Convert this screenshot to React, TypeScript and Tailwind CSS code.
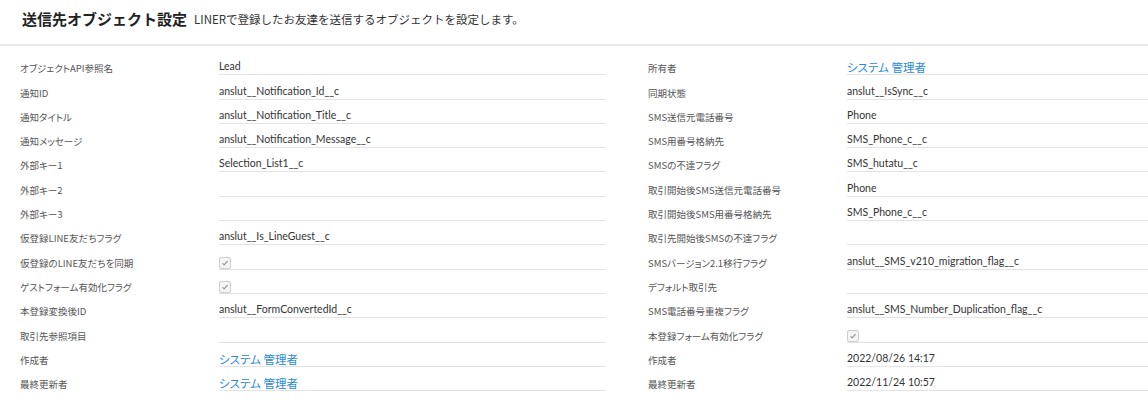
import React from "react";

type Cell =
  | { kind: "text"; v: string }
  | { kind: "link"; v: string }
  | { kind: "check" }
  | { kind: "empty" };

const t = (v: string): Cell => ({ kind: "text", v });
const link = (v: string): Cell => ({ kind: "link", v });
const check: Cell = { kind: "check" };
const empty: Cell = { kind: "empty" };

const left: [string, Cell][] = [
  ["オブジェクトAPI参照名", t("Lead")],
  ["通知ID", t("anslut__Notification_Id__c")],
  ["通知タイトル", t("anslut__Notification_Title__c")],
  ["通知メッセージ", t("anslut__Notification_Message__c")],
  ["外部キー1", t("Selection_List1__c")],
  ["外部キー2", empty],
  ["外部キー3", empty],
  ["仮登録LINE友だちフラグ", t("anslut__Is_LineGuest__c")],
  ["仮登録のLINE友だちを同期", check],
  ["ゲストフォーム有効化フラグ", check],
  ["本登録変換後ID", t("anslut__FormConvertedId__c")],
  ["取引先参照項目", empty],
  ["作成者", link("システム 管理者")],
  ["最終更新者", link("システム 管理者")],
];

const right: [string, Cell][] = [
  ["所有者", link("システム 管理者")],
  ["同期状態", t("anslut__IsSync__c")],
  ["SMS送信元電話番号", t("Phone")],
  ["SMS用番号格納先", t("SMS_Phone_c__c")],
  ["SMSの不達フラグ", t("SMS_hutatu__c")],
  ["取引開始後SMS送信元電話番号", t("Phone")],
  ["取引開始後SMS用番号格納先", t("SMS_Phone_c__c")],
  ["取引先開始後SMSの不達フラグ", empty],
  ["SMSバージョン2.1移行フラグ", t("anslut__SMS_v210_migration_flag__c")],
  ["デフォルト取引先", empty],
  ["SMS電話番号重複フラグ", t("anslut__SMS_Number_Duplication_flag__c")],
  ["本登録フォーム有効化フラグ", check],
  ["作成者", t("2022/08/26 14:17")],
  ["最終更新者", t("2022/11/24 10:57")],
];

function Value({ c }: { c: Cell }) {
  if (c.kind === "text")
    return (
      <span className="mb-[1px] text-[10.5px] leading-[13px] text-[#333] font-['Lato','Noto_Sans_CJK_JP',sans-serif]">
        {c.v}
      </span>
    );
  if (c.kind === "link")
    return (
      <span className="text-[11.5px] leading-[14px] text-[#2a8ad8] [font-feature-settings:'palt'] font-['Noto_Sans_CJK_JP',sans-serif]">
        {c.v}
      </span>
    );
  if (c.kind === "check")
    return (
      <span className="flex h-[12px] w-[12px] items-center justify-center rounded-[2px] border border-[#cfcfcf] bg-[#f4f4f4]">
        <svg width="8" height="8" viewBox="0 0 8 8">
          <path d="M1.5 4.3 L3.2 5.8 L6.5 2.2" fill="none" stroke="#8a8a8a" strokeWidth="1.1" />
        </svg>
      </span>
    );
  return <span className="h-[13px]" />;
}

function Column({ rows, className }: { rows: [string, Cell][]; className: string }) {
  return (
    <div className={className}>
      {rows.map(([label, c], i) => (
        <div key={i} className="flex h-[24.3px] items-end">
          <div className="-mb-[3px] w-[199px] shrink-0 pb-[3px] text-[9.5px] leading-[13px] text-[#555] [font-feature-settings:'palt'] font-['Noto_Sans_CJK_JP',sans-serif]">
            {label}
          </div>
          <div className="flex h-full flex-1 items-end border-b border-[#e3e3e3]">
            <Value c={c} />
          </div>
        </div>
      ))}
    </div>
  );
}

export default function App() {
  return (
    <div className="h-[409px] w-[1148px] overflow-hidden bg-white font-['Noto_Sans_CJK_JP',sans-serif]">
      <div className="flex h-[46px] items-center border-b-2 border-[#e8e8e8] pb-[6px] pl-[22px]">
        <h1 className="text-[15px] font-bold leading-[20px] text-[#222]">送信先オブジェクト設定</h1>
        <p className="ml-[7px] text-[11.5px] leading-[14px] text-[#333]">
          LINERで登録したお友達を送信するオブジェクトを設定します。
        </p>
      </div>
      <div className="flex pt-[5px]">
        <Column rows={left} className="w-[606px] pl-[20px]" />
        <Column rows={right} className="flex-1 pl-[42px]" />
      </div>
    </div>
  );
}
